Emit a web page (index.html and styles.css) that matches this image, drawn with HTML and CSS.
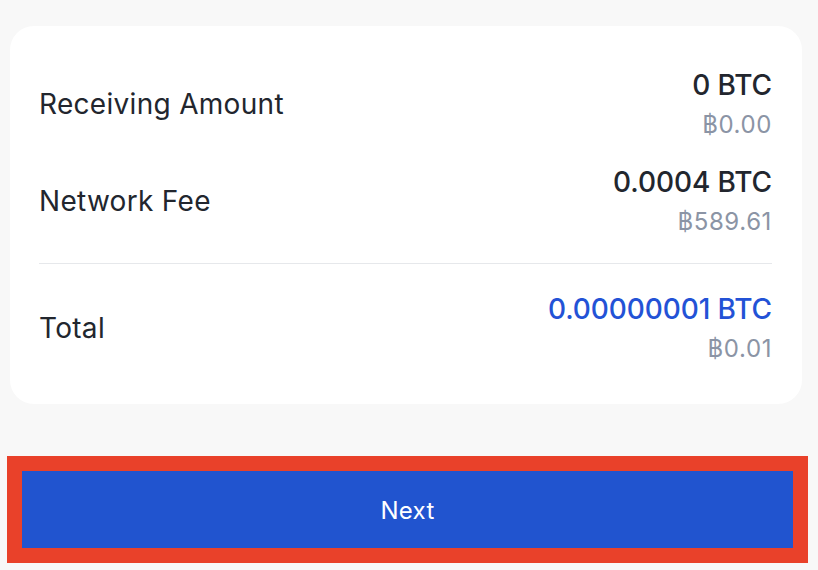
FILE: index.html
```html
<!DOCTYPE html>
<html lang="en">
<head>
    <meta charset="UTF-8">
    <meta name="viewport" content="width=device-width, initial-scale=1.0">
    <title>Send Summary</title>
    <link rel="stylesheet" href="styles.css">
</head>
<body>
    <div class="summary-card">
        <div class="summary-row">
            <span class="row-label">Receiving Amount</span>
            <div class="row-values">
                <span class="amount">0 BTC</span>
                <span class="fiat">฿0.00</span>
            </div>
        </div>
        <div class="summary-row">
            <span class="row-label">Network Fee</span>
            <div class="row-values">
                <span class="amount">0.0004 BTC</span>
                <span class="fiat">฿589.61</span>
            </div>
        </div>
        <hr class="divider">
        <div class="summary-row">
            <span class="row-label">Total</span>
            <div class="row-values">
                <span class="amount amount-total">0.00000001 BTC</span>
                <span class="fiat">฿0.01</span>
            </div>
        </div>
    </div>

    <div class="next-wrap">
        <button class="next-btn">Next</button>
    </div>
</body>
</html>
```

FILE: styles.css
```css
body {
    margin: 0;
    padding: 26px 16px 0 10px;
    background-color: #f8f8f8;
    font-family: Inter, "Noto Sans", sans-serif;
    color: #22262e;
}
.summary-card {
    background-color: #fff;
    border-radius: 24px;
    padding: 40px 30px 34px 29px;
    display: flex;
    flex-direction: column;
    gap: 17px;
}
.summary-row {
    display: flex;
    justify-content: space-between;
    align-items: center;
}
.row-label {
    font-size: 28px;
    line-height: 34px;
    margin-bottom: 4px;
    letter-spacing: 0.3px;
}
.row-values {
    display: flex;
    flex-direction: column;
    align-items: flex-end;
}
.amount {
    font-size: 28px;
    font-weight: 500;
    line-height: 38px;
    letter-spacing: -0.1px;
}
.amount-total {
    color: #2352d6;
}
.fiat {
    font-size: 24px;
    line-height: 42px;
    letter-spacing: 0.6px;
    color: #8b94a5;
}
.divider {
    border: none;
    border-top: 1px solid #e6e8eb;
    margin: 3px 0 9px;
}
.next-wrap {
    margin: 52px -6px 0 -3px;
    border: 15px solid #e9412a;
}
.next-btn {
    display: block;
    width: 100%;
    height: 77px;
    padding-top: 3px;
    border: none;
    background-color: #2154cf;
    color: #fff;
    font-family: Inter, "Noto Sans", sans-serif;
    font-size: 24px;
    letter-spacing: 0.3px;
}
```
